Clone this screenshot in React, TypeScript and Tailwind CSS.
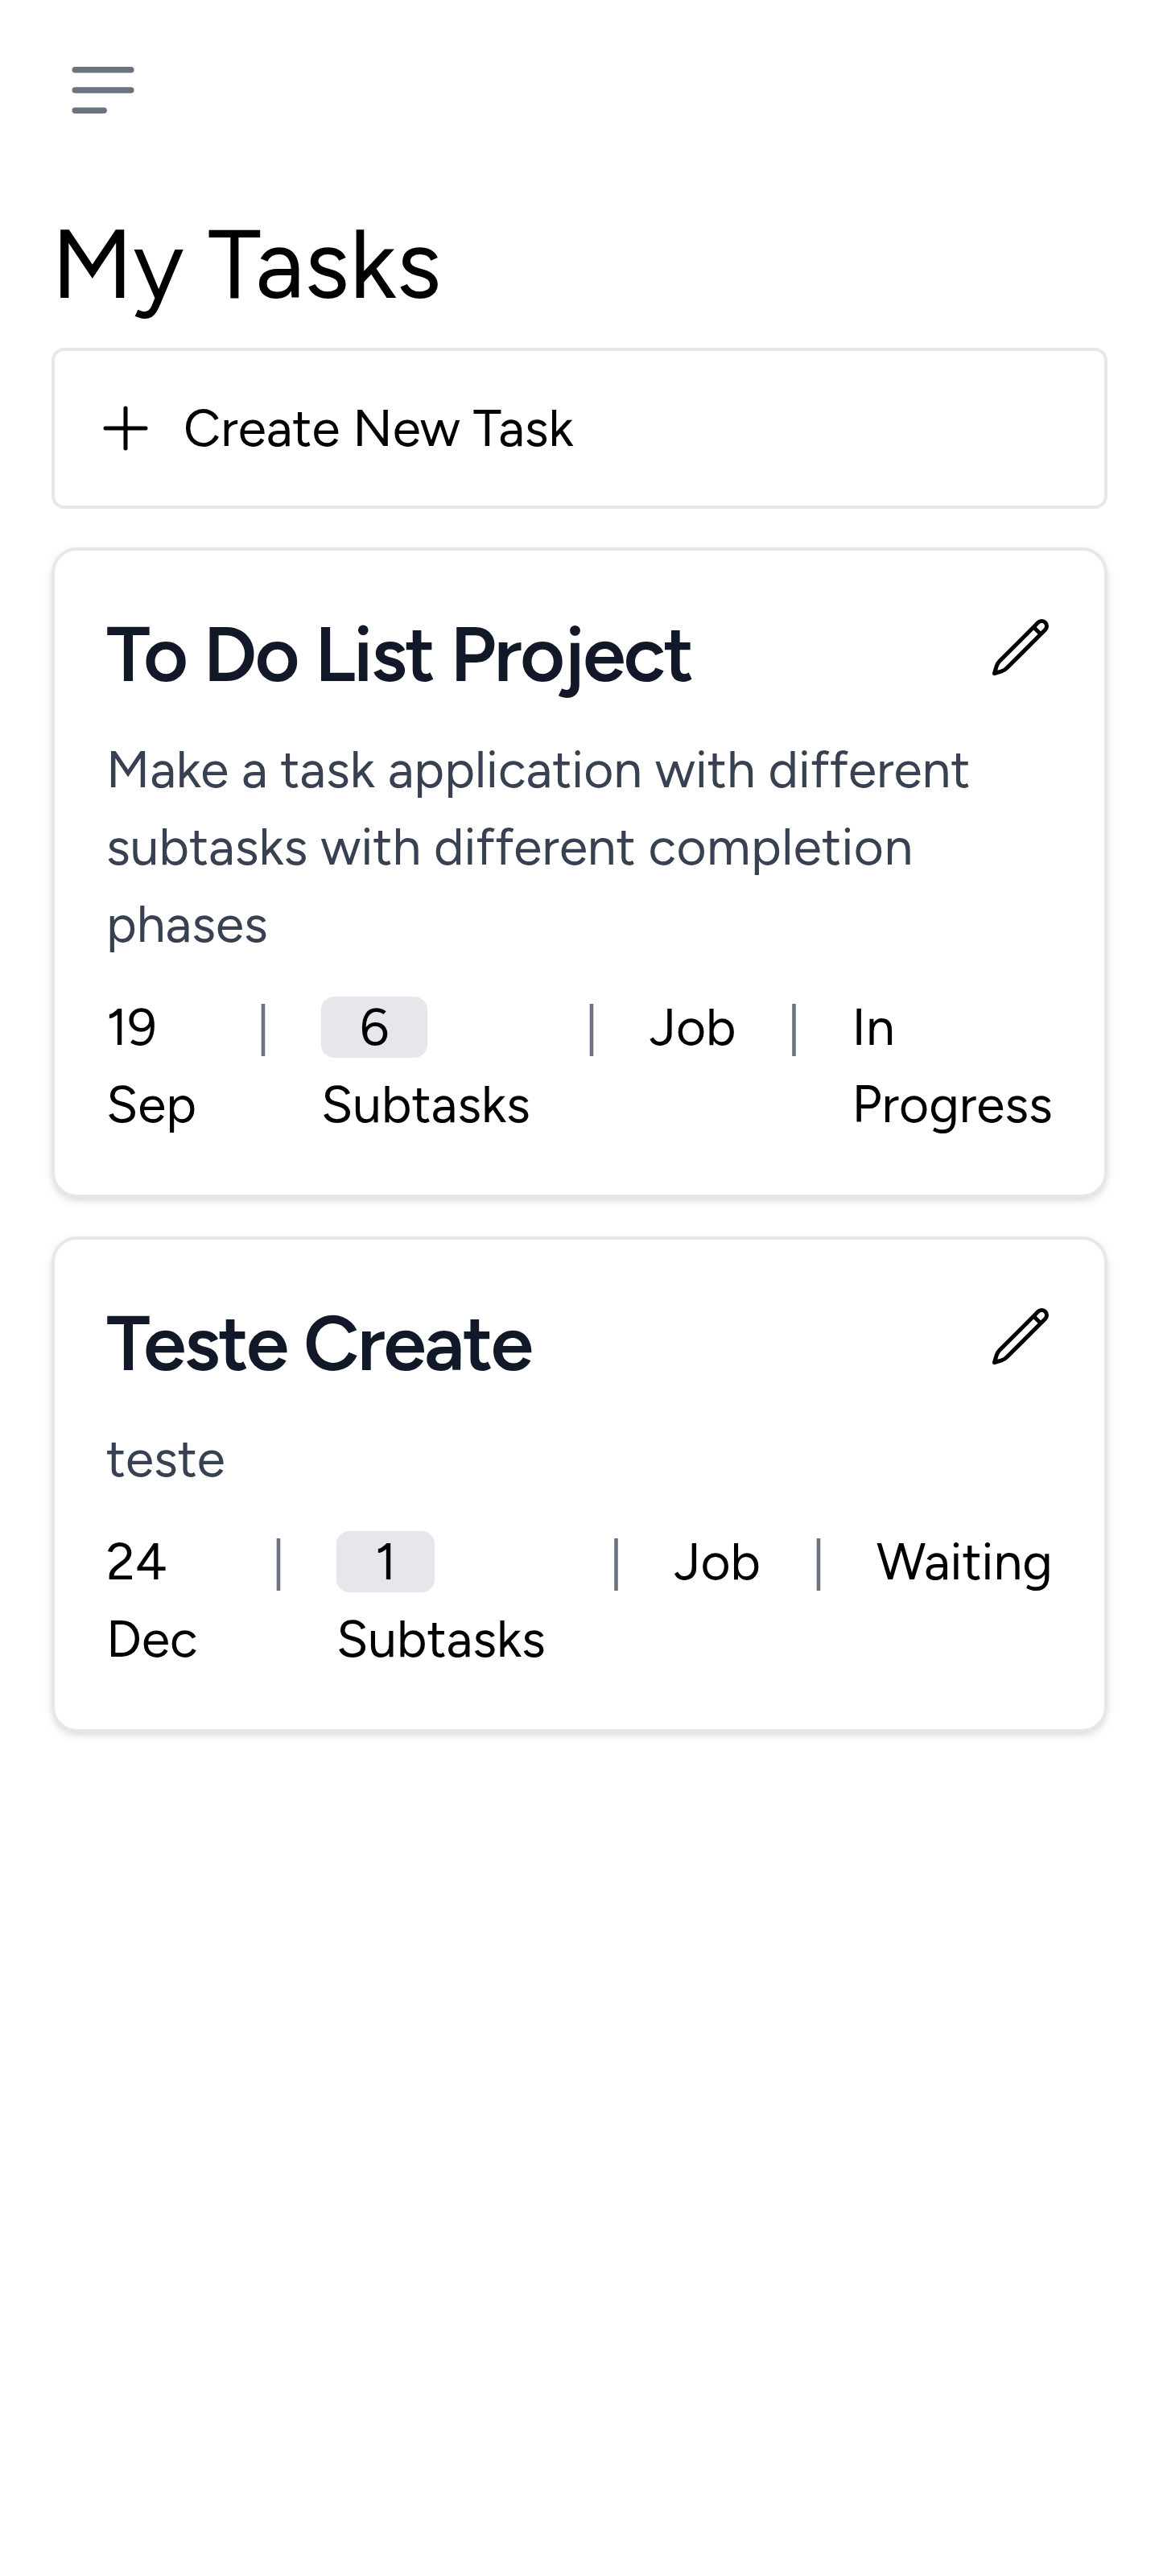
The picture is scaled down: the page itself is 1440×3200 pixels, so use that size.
import React from "react";

type Task = {
  title: string;
  description: React.ReactNode;
  date: string;
  subtasks: number;
  category: string;
  status: string;
  dateWidth: string;
  subtasksWidth: string;
};

const tasks: Task[] = [
  {
    title: "To Do List Project",
    description: (
      <>
        Make a task application with different subtasks with different{" "}
        <span className="tracking-[0.4px]">completion</span> phases
      </>
    ),
    date: "19 Sep",
    subtasks: 6,
    category: "Job",
    status: "In Progress",
    dateWidth: "w-[123px]",
    subtasksWidth: "w-[264px]",
  },
  {
    title: "Teste Create",
    description: "teste",
    date: "24 Dec",
    subtasks: 1,
    category: "Job",
    status: "Waiting",
    dateWidth: "w-[142px]",
    subtasksWidth: "w-[275.5px]",
  },
];

function MenuIcon() {
  return (
    <svg className="h-28 w-28" viewBox="0 0 112 112" fill="none" stroke="currentColor" strokeWidth="7.6" strokeLinecap="round">
      <path d="M21.3 30.7h69.5M21.3 56h69.5M21.3 81.2h35.8" />
    </svg>
  );
}

function PlusIcon() {
  return (
    <svg className="h-20 w-20 shrink-0" viewBox="0 0 24 24" fill="none" stroke="currentColor" strokeWidth="1.5" strokeLinecap="round" strokeLinejoin="round">
      <path d="M12 4.5v15m7.5-7.5h-15" />
    </svg>
  );
}

function PencilIcon() {
  return (
    <svg className="h-20 w-20" viewBox="0 0 24 24" fill="none" stroke="currentColor" strokeWidth="1.5" strokeLinecap="round" strokeLinejoin="round">
      <path d="M16.862 4.487l1.687-1.688a1.875 1.875 0 112.652 2.652L6.832 19.82a4.5 4.5 0 01-1.897 1.13l-2.685.8.8-2.685a4.5 4.5 0 011.13-1.897L16.863 4.487zm0 0L19.5 7.125" />
    </svg>
  );
}

function Separator() {
  return <span className="w-36 shrink-0 text-center text-[#6b7280]">|</span>;
}

function TaskCard({ task }: { task: Task }) {
  return (
    <article className="rounded-[32px] border-4 border-[#e5e7eb] bg-white p-16 shadow-[0_4px_12px_0_rgb(0_0_0/0.1),0_4px_8px_-4px_rgb(0_0_0/0.1)]">
      <header className="mb-8 flex h-32 items-start justify-between">
        <h2 className="pt-px text-[96px] leading-[128px] font-semibold tracking-tight text-[#111827]">{task.title}</h2>
        <button className="mt-4" aria-label="Edit task">
          <PencilIcon />
        </button>
      </header>
      <p className="mb-8 text-[#374151]">{task.description}</p>
      <div className="flex items-start">
        <div className={`${task.dateWidth} shrink-0`}>
          {task.date.split(" ").map((part) => (
            <span key={part} className="block">{part}</span>
          ))}
        </div>
        <Separator />
        <div className={`${task.subtasksWidth} shrink-0`}>
          <span className="inline-block rounded-2xl bg-[#e5e7eb] px-12 leading-[76px]">{task.subtasks}</span>{" "}
          <span className="inline-block">Subtasks</span>
        </div>
        <Separator />
        <div className="shrink-0">{task.category}</div>
        <Separator />
        <div className="min-w-0 flex-1">{task.status}</div>
      </div>
    </article>
  );
}

export default function App() {
  return (
    <div className="min-h-[3200px] bg-white px-16 font-['Figtree',Lato,sans-serif] text-[64px] leading-[96px] text-black">
      <nav className="flex h-64 items-start pt-14 pl-2">
        <button className="text-[#6b7280]" aria-label="Open menu">
          <MenuIcon />
        </button>
      </nav>
      <main>
        <h1 className="mb-8 text-[120px] leading-[144px]">My Tasks</h1>
        <button className="mb-12 flex h-[200px] w-full items-center gap-8 rounded-2xl border-4 border-[#e5e7eb] px-12 text-left">
          <PlusIcon />
          Create New Task
        </button>
        <div className="flex flex-col gap-12">
          {tasks.map((task) => (
            <TaskCard key={task.title} task={task} />
          ))}
        </div>
      </main>
    </div>
  );
}
